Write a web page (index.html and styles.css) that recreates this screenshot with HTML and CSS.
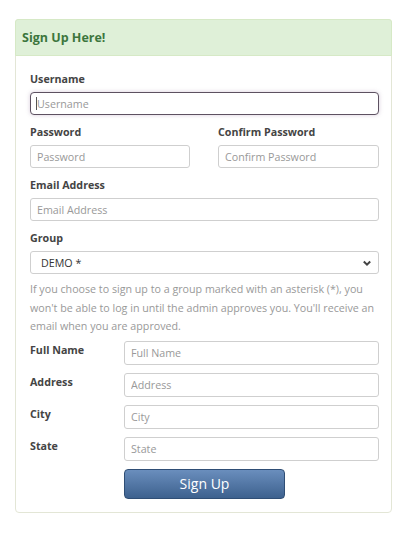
FILE: index.html
```html
<!DOCTYPE html>
<html>
<head>
<meta charset="utf-8">
<link rel="stylesheet" href="styles.css">
</head>
<body>
<div class="panel">
  <div class="panel-heading">Sign Up Here!</div>
  <form class="panel-body">
    <div class="group">
      <label class="lbl">Username</label>
      <div class="focus-wrap">
        <input class="field focused" type="text" placeholder="Username">
        <span class="caret"></span>
      </div>
    </div>
    <div class="two">
      <div class="group">
        <label class="lbl">Password</label>
        <input class="field" type="password" placeholder="Password">
      </div>
      <div class="group">
        <label class="lbl">Confirm Password</label>
        <input class="field" type="password" placeholder="Confirm Password">
      </div>
    </div>
    <div class="group">
      <label class="lbl">Email Address</label>
      <input class="field" type="text" placeholder="Email Address">
    </div>
    <div class="group last">
      <label class="lbl">Group</label>
      <div class="select">
        <span>DEMO *</span>
        <svg class="chev" width="10" height="7" viewBox="0 0 10 7"><path d="M1.8 1.5 L5 4.7 L8.2 1.5" fill="none" stroke="#444" stroke-width="2"/></svg>
      </div>
    </div>
    <p class="help">If you choose to sign up to a group marked with an asterisk (*), you won't be able to log in until the admin approves you. You'll receive an email when you are approved.</p>
    <div class="row">
      <label class="lbl side">Full Name</label>
      <input class="field" type="text" placeholder="Full Name">
    </div>
    <div class="row">
      <label class="lbl side">Address</label>
      <input class="field" type="text" placeholder="Address">
    </div>
    <div class="row">
      <label class="lbl side">City</label>
      <input class="field" type="text" placeholder="City">
    </div>
    <div class="row">
      <label class="lbl side">State</label>
      <input class="field" type="text" placeholder="State">
    </div>
    <div class="row actions">
      <span class="side"></span>
      <button type="button" class="btn">Sign Up</button>
    </div>
  </form>
</div>
</body>
</html>
```

FILE: styles.css
```css
* { box-sizing: border-box; }
html, body { background: #fff; }
body {
  margin: 0;
  font-family: "Open Sans", "Noto Sans", sans-serif;
  color: #444;
}
.panel {
  margin: 19px 28px 0 15px;
  border: 1px solid #e3e6d6;
  border-radius: 4px;
  background: #fff;
}
.panel-heading {
  background: #dff0d8;
  border: 1px solid #d6e9c6;
  border-radius: 3px 3px 0 0;
  color: #3c763d;
  font-weight: 700;
  font-size: 12.5px;
  height: 37px;
  line-height: 35px;
  padding-left: 6px;
  margin: -1px -1px 0 -1px;
}
.panel-body {
  padding: 15px 12px 13px 14px;
  margin: 0;
}
.group { margin-bottom: 9px; }
.group.last { margin-bottom: 0; }
.lbl {
  display: block;
  font-size: 10.7px;
  font-weight: 700;
  line-height: 16px;
  margin-bottom: 5px;
  color: #444;
}
.field {
  display: block;
  width: 100%;
  height: 23px;
  border: 1px solid #cfcfcf;
  border-radius: 3px;
  padding: 0 6px;
  font-family: "Open Sans", "Noto Sans", sans-serif;
  font-size: 10.7px;
  color: #333;
  background: #fff;
  outline: none;
}
.field::placeholder { color: #999; }
.focus-wrap { position: relative; }
.field.focused {
  border: 1px solid #5d5161;
  border-radius: 4px;
  box-shadow: 0 0 4px rgba(140, 110, 150, 0.35);
}
.caret {
  position: absolute;
  left: 6px;
  top: 5px;
  width: 1px;
  height: 13px;
  background: #555;
}
.two {
  display: grid;
  grid-template-columns: 160px 161px;
  justify-content: space-between;
}
.select {
  height: 23px;
  border: 1px solid #cfcfcf;
  border-radius: 3px;
  display: flex;
  align-items: center;
  justify-content: space-between;
  padding: 0 6px 0 10px;
  font-size: 10.7px;
  color: #333;
}
.chev { margin-top: 1px; }
.help {
  margin: 6px 0 5px 0;
  font-size: 10.7px;
  line-height: 18.5px;
  color: #999;
}
.row {
  display: flex;
  align-items: flex-start;
  margin-bottom: 8px;
}
.row .side {
  flex: 0 0 94px;
  margin: 0;
  padding-top: 1px;
}
.row .field { flex: 1; height: 24px; }
.actions { margin-top: 8px; margin-bottom: 0; }
.btn {
  width: 161px;
  height: 30px;
  border: 1px solid #2f4e75;
  border-radius: 4px;
  background: linear-gradient(#6a8ebd, #3d618e);
  color: #fff;
  font-family: "Open Sans", "Noto Sans", sans-serif;
  font-size: 14px;
  padding: 0;
  cursor: pointer;
}
```
